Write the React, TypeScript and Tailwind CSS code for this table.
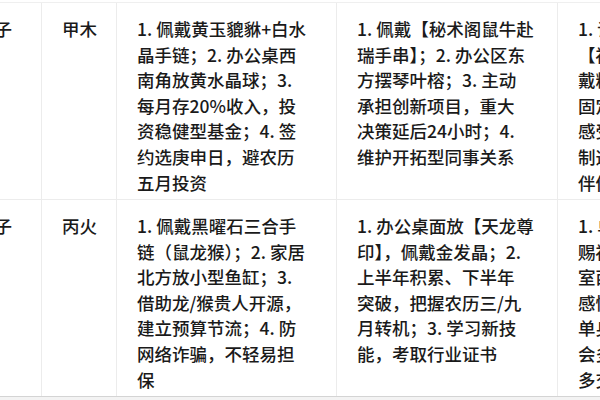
const rows = [
  {
    year: '甲子',
    element: '甲木',
    wealth: ['1. 佩戴黄玉貔貅+白水', '晶手链；2. 办公桌西', '南角放黄水晶球；3.', '每月存20%收入，投', '资稳健型基金；4. 签', '约选庚申日，避农历', '五月投资'],
    career: ['1. 佩戴【秘术阁鼠牛赴', '瑞手串】；2. 办公区东', '方摆琴叶榕；3. 主动', '承担创新项目，重大', '决策延后24小时；4.', '维护开拓型同事关系'],
    love: ['1. 请佩', '【福禄', '戴粉晶', '固定约', '感受彼', '制造惊', '伴侣'],
  },
  {
    year: '丙子',
    element: '丙火',
    wealth: ['1. 佩戴黑曜石三合手', '链（鼠龙猴）；2. 家居', '北方放小型鱼缸；3.', '借助龙/猴贵人开源，', '建立预算节流；4. 防', '网络诈骗，不轻易担', '保'],
    career: ['1. 办公桌面放【天龙尊', '印】，佩戴金发晶；2.', '上半年积累、下半年', '突破，把握农历三/九', '月转机；3. 学习新技', '能，考取行业证书'],
    love: ['1. 单身', '赐福', '室西南', '感情稳', '单身者', '会多留', '多交流'],
  },
];

function Cell({ lines }: { lines: string[] }) {
  return (
    <div className="border-r border-[#ececec] pl-5 pt-[13px]">
      {lines.map((line) => (
        <div key={line} className="whitespace-nowrap leading-[25.6px]">
          {line}
        </div>
      ))}
    </div>
  );
}

export default function App() {
  return (
    <div
      className="h-[400px] w-[600px] overflow-hidden bg-white text-[17.5px] font-medium text-[#1a1a1a]"
      style={{ fontFamily: '"Noto Sans CJK SC", "Noto Sans", sans-serif' }}
    >
      <div className="h-[3px] border-b border-[#efefef]" />
      <div className="-ml-[43px] w-[822px]">
        {rows.map((row, i) => (
          <div
            key={row.year}
            className={`grid h-[197px] grid-cols-[85px_75px_220px_221px_221px] border-b ${i === rows.length - 1 ? 'border-[#d4d4d4]' : 'border-[#ececec]'}`}
          >
            <Cell lines={[row.year]} />
            <Cell lines={[row.element]} />
            <Cell lines={row.wealth} />
            <Cell lines={row.career} />
            <Cell lines={row.love} />
          </div>
        ))}
      </div>
      <div className="h-[4px] bg-[#f3f3f3]" />
    </div>
  );
}
